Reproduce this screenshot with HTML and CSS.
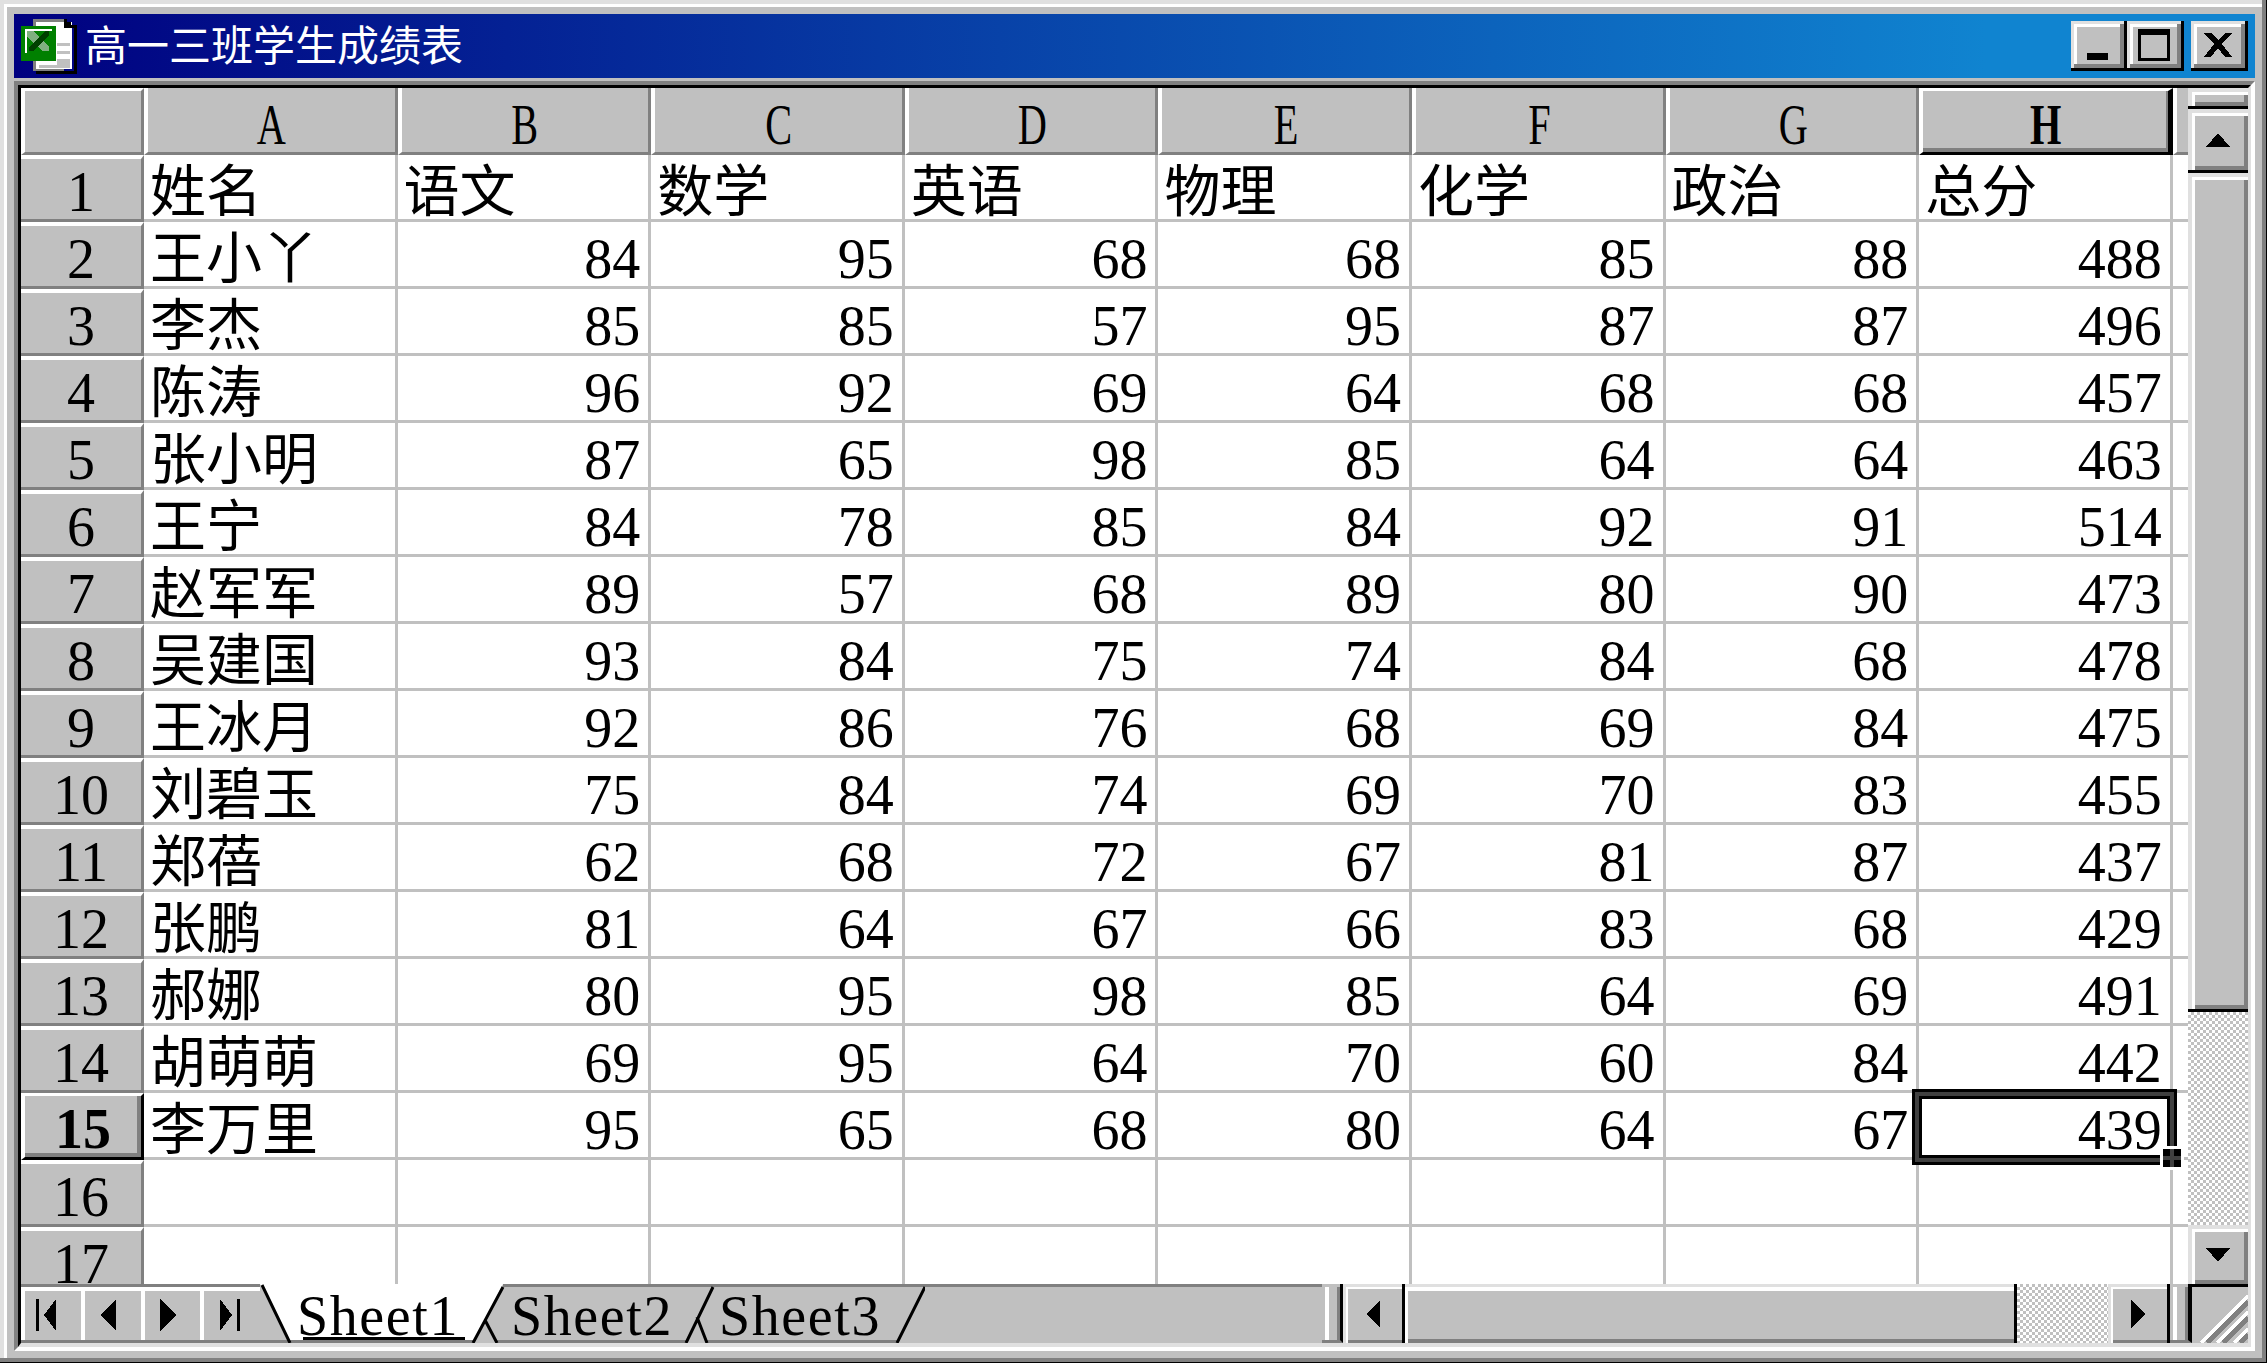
FILE: index.html
```html
<!DOCTYPE html>
<html lang="zh">
<head>
<meta charset="utf-8">
<title>高一三班学生成绩表</title>
<link rel="stylesheet" href="styles.css">
</head>
<body>
<div class="window">
  <div class="titlebar">
    <svg class="app-icon" viewBox="0 0 57 55" width="57" height="55" shape-rendering="crispEdges">
      <rect x="12" y="0" width="31" height="52" fill="#808080"/>
      <rect x="15" y="3" width="36" height="47" fill="#fff"/>
      <polygon points="43,0 46,0 46,3 50,3 50,6 56,6 56,55 15,55 15,52 53,52 53,9 43,9" fill="#000"/>
      <rect x="36" y="24" width="13" height="3" fill="#c0c0c0"/>
      <rect x="36" y="32" width="13" height="3" fill="#c0c0c0"/>
      <rect x="36" y="40" width="13" height="6" fill="#c0c0c0"/>
      <rect x="18" y="46" width="31" height="3" fill="#c0c0c0"/>
      <rect x="0" y="7" width="35" height="35" fill="#008000"/>
      <rect x="4" y="10" width="27" height="24" fill="#fff"/>
      <rect x="6" y="12" width="25" height="22" fill="#008000"/>
      <polygon points="6,12 12,12 28,28 28,32 22,32 6,18" fill="#80b080"/>
      <polygon points="24,12 28,12 28,16 12,32 8,32 8,28" fill="#004000"/>
    </svg>
    <span class="title-text">高一三班学生成绩表</span>
    <div class="win-buttons">
      <div class="win-btn min"><i class="min-glyph"></i></div>
      <div class="win-btn max"><i class="max-glyph"></i></div>
      <div class="win-btn close">
        <svg viewBox="0 0 28 24" width="28" height="24" shape-rendering="crispEdges"><path d="M0 0h7l7 7 7-7h7l-10 11 10 13h-7l-7-9-7 9H0l10-13z" fill="#000"/></svg>
      </div>
    </div>
  </div>
  <div class="client-outer">
    <div class="client">
      <div class="main">
        <div class="sheet">
          <div class="corner"></div>
          <div class="ch"><span class="t">A</span></div><div class="ch"><span class="t">B</span></div><div class="ch"><span class="t">C</span></div><div class="ch"><span class="t">D</span></div><div class="ch"><span class="t">E</span></div><div class="ch"><span class="t">F</span></div><div class="ch"><span class="t">G</span></div><div class="ch sel-col"><span class="t">H</span></div><div class="ch last"></div>

          <div class="rh"><span class="t">1</span></div><div class="c s">姓名</div><div class="c s">语文</div><div class="c s">数学</div><div class="c s">英语</div><div class="c s">物理</div><div class="c s">化学</div><div class="c s">政治</div><div class="c s">总分</div><div class="c x"></div>
          <div class="rh"><span class="t">2</span></div><div class="c s">王小丫</div><div class="c n"><span class="t">84</span></div><div class="c n"><span class="t">95</span></div><div class="c n"><span class="t">68</span></div><div class="c n"><span class="t">68</span></div><div class="c n"><span class="t">85</span></div><div class="c n"><span class="t">88</span></div><div class="c n"><span class="t">488</span></div><div class="c x"></div>
          <div class="rh"><span class="t">3</span></div><div class="c s">李杰</div><div class="c n"><span class="t">85</span></div><div class="c n"><span class="t">85</span></div><div class="c n"><span class="t">57</span></div><div class="c n"><span class="t">95</span></div><div class="c n"><span class="t">87</span></div><div class="c n"><span class="t">87</span></div><div class="c n"><span class="t">496</span></div><div class="c x"></div>
          <div class="rh"><span class="t">4</span></div><div class="c s">陈涛</div><div class="c n"><span class="t">96</span></div><div class="c n"><span class="t">92</span></div><div class="c n"><span class="t">69</span></div><div class="c n"><span class="t">64</span></div><div class="c n"><span class="t">68</span></div><div class="c n"><span class="t">68</span></div><div class="c n"><span class="t">457</span></div><div class="c x"></div>
          <div class="rh"><span class="t">5</span></div><div class="c s">张小明</div><div class="c n"><span class="t">87</span></div><div class="c n"><span class="t">65</span></div><div class="c n"><span class="t">98</span></div><div class="c n"><span class="t">85</span></div><div class="c n"><span class="t">64</span></div><div class="c n"><span class="t">64</span></div><div class="c n"><span class="t">463</span></div><div class="c x"></div>
          <div class="rh"><span class="t">6</span></div><div class="c s">王宁</div><div class="c n"><span class="t">84</span></div><div class="c n"><span class="t">78</span></div><div class="c n"><span class="t">85</span></div><div class="c n"><span class="t">84</span></div><div class="c n"><span class="t">92</span></div><div class="c n"><span class="t">91</span></div><div class="c n"><span class="t">514</span></div><div class="c x"></div>
          <div class="rh"><span class="t">7</span></div><div class="c s">赵军军</div><div class="c n"><span class="t">89</span></div><div class="c n"><span class="t">57</span></div><div class="c n"><span class="t">68</span></div><div class="c n"><span class="t">89</span></div><div class="c n"><span class="t">80</span></div><div class="c n"><span class="t">90</span></div><div class="c n"><span class="t">473</span></div><div class="c x"></div>
          <div class="rh"><span class="t">8</span></div><div class="c s">吴建国</div><div class="c n"><span class="t">93</span></div><div class="c n"><span class="t">84</span></div><div class="c n"><span class="t">75</span></div><div class="c n"><span class="t">74</span></div><div class="c n"><span class="t">84</span></div><div class="c n"><span class="t">68</span></div><div class="c n"><span class="t">478</span></div><div class="c x"></div>
          <div class="rh"><span class="t">9</span></div><div class="c s">王冰月</div><div class="c n"><span class="t">92</span></div><div class="c n"><span class="t">86</span></div><div class="c n"><span class="t">76</span></div><div class="c n"><span class="t">68</span></div><div class="c n"><span class="t">69</span></div><div class="c n"><span class="t">84</span></div><div class="c n"><span class="t">475</span></div><div class="c x"></div>
          <div class="rh"><span class="t">10</span></div><div class="c s">刘碧玉</div><div class="c n"><span class="t">75</span></div><div class="c n"><span class="t">84</span></div><div class="c n"><span class="t">74</span></div><div class="c n"><span class="t">69</span></div><div class="c n"><span class="t">70</span></div><div class="c n"><span class="t">83</span></div><div class="c n"><span class="t">455</span></div><div class="c x"></div>
          <div class="rh"><span class="t">11</span></div><div class="c s">郑蓓</div><div class="c n"><span class="t">62</span></div><div class="c n"><span class="t">68</span></div><div class="c n"><span class="t">72</span></div><div class="c n"><span class="t">67</span></div><div class="c n"><span class="t">81</span></div><div class="c n"><span class="t">87</span></div><div class="c n"><span class="t">437</span></div><div class="c x"></div>
          <div class="rh"><span class="t">12</span></div><div class="c s">张鹏</div><div class="c n"><span class="t">81</span></div><div class="c n"><span class="t">64</span></div><div class="c n"><span class="t">67</span></div><div class="c n"><span class="t">66</span></div><div class="c n"><span class="t">83</span></div><div class="c n"><span class="t">68</span></div><div class="c n"><span class="t">429</span></div><div class="c x"></div>
          <div class="rh"><span class="t">13</span></div><div class="c s">郝娜</div><div class="c n"><span class="t">80</span></div><div class="c n"><span class="t">95</span></div><div class="c n"><span class="t">98</span></div><div class="c n"><span class="t">85</span></div><div class="c n"><span class="t">64</span></div><div class="c n"><span class="t">69</span></div><div class="c n"><span class="t">491</span></div><div class="c x"></div>
          <div class="rh"><span class="t">14</span></div><div class="c s">胡萌萌</div><div class="c n"><span class="t">69</span></div><div class="c n"><span class="t">95</span></div><div class="c n"><span class="t">64</span></div><div class="c n"><span class="t">70</span></div><div class="c n"><span class="t">60</span></div><div class="c n"><span class="t">84</span></div><div class="c n"><span class="t">442</span></div><div class="c x"></div>
          <div class="rh sel-row"><span class="t">15</span></div><div class="c s">李万里</div><div class="c n"><span class="t">95</span></div><div class="c n"><span class="t">65</span></div><div class="c n"><span class="t">68</span></div><div class="c n"><span class="t">80</span></div><div class="c n"><span class="t">64</span></div><div class="c n"><span class="t">67</span></div><div class="c n active"><span class="t">439</span><i class="sel-box"></i><i class="handle"></i></div><div class="c x"></div>
          <div class="rh"><span class="t">16</span></div><div class="c"></div><div class="c"></div><div class="c"></div><div class="c"></div><div class="c"></div><div class="c"></div><div class="c"></div><div class="c"></div><div class="c x"></div>
          <div class="rh"><span class="t">17</span></div><div class="c"></div><div class="c"></div><div class="c"></div><div class="c"></div><div class="c"></div><div class="c"></div><div class="c"></div><div class="c"></div><div class="c x"></div>
        </div>
        <div class="vscroll">
          <div class="vsplit"></div>
          <div class="sb-btn up">
            <svg viewBox="0 0 24 14" width="24" height="14" shape-rendering="crispEdges"><polygon points="12,0 24,14 0,14" fill="#000"/></svg>
          </div>
          <div class="vthumb"></div>
          <div class="track"></div>
          <div class="sb-btn down">
            <svg viewBox="0 0 24 14" width="24" height="14" shape-rendering="crispEdges"><polygon points="0,0 24,0 12,14" fill="#000"/></svg>
          </div>
        </div>
      </div>
      <div class="bottom">
        <div class="nav">
          <div class="nav-btn"><svg viewBox="0 0 24 32" width="24" height="32" shape-rendering="crispEdges"><rect x="0" y="0" width="3" height="32"/><polygon points="8,16 20,0 20,32"/></svg></div>
          <div class="nav-btn"><svg viewBox="0 0 16 32" width="16" height="32" shape-rendering="crispEdges"><polygon points="0,16 16,0 16,32"/></svg></div>
          <div class="nav-btn"><svg viewBox="0 0 16 32" width="16" height="32" shape-rendering="crispEdges"><polygon points="16,16 0,0 0,32"/></svg></div>
          <div class="nav-btn"><svg viewBox="0 0 24 32" width="24" height="32" shape-rendering="crispEdges"><rect x="21" y="0" width="3" height="32"/><polygon points="16,16 4,0 4,32"/></svg></div>
        </div>
        <div class="tabs">
          <svg class="tabs-art" viewBox="0 0 665 59" width="665" height="59">
            <rect x="243" y="0" width="422" height="3" fill="#808080"/>
            <polygon points="0,0 243,0 213,59 30,59" fill="#fff"/>
            <rect x="0" y="56" width="637" height="3" fill="#808080"/>
            <rect x="43" y="53" width="162" height="3" fill="#000"/>
            <polygon points="225,36 237,59 213,59" fill="#c0c0c0"/>
            <polygon points="437,33 447,59 426,59" fill="#c0c0c0"/>
            <path d="M2 1 30 59M243 3 213 59M225 36 237 59M453 3 426 59M437 33 447 59M665 3 637 59" stroke="#000" stroke-width="3" fill="none"/>
          </svg>
          <span class="tab first"><span class="t">Sheet1</span></span>
          <span class="tab second"><span class="t">Sheet2</span></span>
          <span class="tab third"><span class="t">Sheet3</span></span>
        </div>
        <div class="filler"></div>
        <div class="hsplit"></div>
        <div class="hbtn">
          <svg viewBox="0 0 14 28" width="14" height="28" shape-rendering="crispEdges"><polygon points="0,14 14,0 14,28"/></svg>
        </div>
        <div class="hthumb"></div>
        <div class="track htrack"></div>
        <div class="hbtn right">
          <svg viewBox="0 0 14 28" width="14" height="28" shape-rendering="crispEdges"><polygon points="14,14 0,0 0,28"/></svg>
        </div>
        <div class="hsplit end"></div>
        <div class="grip">
          <svg viewBox="0 0 56 56" width="56" height="56" shape-rendering="crispEdges">
            <path d="M9 56 56 9M25 56 56 25M42 56 56 42" stroke="#fff" stroke-width="3"/>
            <path d="M15 56 56 15M31 56 56 31M48 56 56 48" stroke="#808080" stroke-width="5"/>
          </svg>
        </div>
      </div>
    </div>
  </div>
</div>
</body>
</html>
```

FILE: styles.css
```css
* { box-sizing: border-box; }
html, body { margin: 0; padding: 0; background: #c0c0c0; }
body { width: 2267px; height: 1363px; overflow: hidden; }

.window {
  width: 2267px;
  height: 1363px;
  padding: 14px 12px 12px 14px;
  background: #c0c0c0;
  display: flex;
  flex-direction: column;
  box-shadow:
    inset -1px -1px 0 #000,
    inset -5px -5px 0 #808080,
    inset 4px 4px 0 #e0e0e0,
    inset 7px 7px 0 #fff;
}

.titlebar {
  flex: none;
  height: 64px;
  display: flex;
  align-items: center;
  padding-left: 7px;
  background: linear-gradient(90deg, #000080 0%, #1084d0 88%, #1084d0 100%);
  color: #fff;
}
.app-icon { flex: none; margin-top: 1px; }
.title-text {
  margin: -7px 0 0 7px;
  font: 400 42px/1 "Noto Sans CJK SC", sans-serif;
  white-space: nowrap;
}
.win-buttons { margin-left: auto; display: flex; padding-right: 7px; }
.win-btn {
  width: 57px;
  height: 50px;
  background: #c0c0c0;
  position: relative;
  display: flex;
  align-items: center;
  justify-content: center;
  box-shadow:
    inset -3px -3px 0 #000,
    inset 3px 3px 0 #e0e0e0,
    inset -7px -7px 0 #808080,
    inset 6px 6px 0 #fff;
}
.win-btn.min { width: 56px; }
.win-btn.max { margin-right: 7px; }
.min-glyph { width: 21px; height: 7px; background: #000; margin-top: 20px; margin-right: 4px; }
.max-glyph { width: 32px; height: 32px; border: 3px solid #000; border-top-width: 6px; margin: -2px 4px 0 0; }
.win-btn.close svg { margin: -3px 4px 0 0; }

.client-outer {
  flex: none;
  margin-top: 3px;
  width: 2241px;
  height: 1270px;
  border-style: solid;
  border-width: 4px;
  border-color: #808080 #fff #fff #808080;
}
.client {
  width: 100%;
  height: 100%;
  border-style: solid;
  border-width: 3px 3px 4px 3px;
  border-color: #000 #e0e0e0 #e0e0e0 #000;
  display: flex;
  flex-direction: column;
  background: #c0c0c0;
}

.main { flex: none; height: 1196px; display: flex; }

.sheet {
  flex: none;
  width: 2167px;
  height: 1196px;
  overflow: hidden;
  display: grid;
  grid-template-columns: 123px repeat(8, 253.6px) 15.2px;
  grid-auto-rows: 67px;
  background: #fff;
}

.t {
  display: inline-block;
  font: 400 56px/1 "Liberation Serif", serif;
  color: #000;
  white-space: nowrap;
}

.corner {
  background: #c0c0c0;
  border-style: solid;
  border-width: 3px 3px 3px 4px;
  border-color: #fff #808080 #808080 #fff;
}

.ch {
  background: #c0c0c0;
  border-style: solid;
  border-width: 0 3px 3px 4px;
  border-color: #c0c0c0 #808080 #808080 #fff;
  display: flex;
  align-items: center;
  justify-content: center;
  overflow: hidden;
  padding-top: 10px;
}
.ch .t { transform: scaleX(.72); }
.ch.last { border-right: 0; }
.ch.sel-col {
  border-width: 3px 5px 3px 4px;
  border-color: #fff #000 #000 #fff;
  box-shadow: inset -2px -4px 0 #808080;
  padding-top: 7px;
}
.ch.sel-col .t { font-weight: 700; }

.rh {
  background: #c0c0c0;
  border-style: solid;
  border-width: 4px 3px 3px 0;
  border-color: #fff #808080 #808080 #c0c0c0;
  display: flex;
  align-items: center;
  justify-content: center;
  overflow: hidden;
  padding-top: 6px;
}
.rh.sel-row {
  border-width: 3px 3px 3px 4px;
  border-color: #fff #000 #000 #fff;
  box-shadow: inset -4px -4px 0 #808080;
  padding-top: 4px;
}
.rh.sel-row .t { font-weight: 700; }

.c {
  background: #fff;
  border-style: solid;
  border-width: 0 3px 3px 0;
  border-color: #c0c0c0;
  position: relative;
  color: #000;
}
.c.x { border-right: 0; }
.c.s {
  font: 400 56px/64px "Noto Sans CJK SC", sans-serif;
  padding-left: 6px;
  white-space: nowrap;
}
.c.n {
  display: flex;
  align-items: center;
  justify-content: flex-end;
  padding: 10px 8px 0 0;
}

.sel-box {
  position: absolute;
  left: -7px;
  right: -7px;
  top: -4px;
  bottom: -8px;
  border: 3px solid #000;
  box-shadow: inset 0 0 0 4px #404040, inset 0 0 0 7px #000;
  z-index: 2;
}
.handle {
  position: absolute;
  right: -11px;
  bottom: -10px;
  width: 18px;
  height: 18px;
  background:
    linear-gradient(#404040, #404040) center / 100% 4px no-repeat,
    linear-gradient(#404040, #404040) center / 4px 100% no-repeat,
    #000;
  outline: 3px solid #fff;
  z-index: 3;
}

.vscroll { flex: none; width: 60px; display: flex; flex-direction: column; background: #fff; }
.vsplit {
  flex: none;
  height: 21px;
  background: #c0c0c0;
  border-bottom: 3px solid #000;
  box-shadow: inset 0 4px 0 #e0e0e0, inset 4px 0 0 #e0e0e0, inset 7px 7px 0 #fff, inset -4px -4px 0 #808080;
}
.sb-btn {
  flex: none;
  background: #c0c0c0;
  display: flex;
  align-items: center;
  justify-content: center;
  box-shadow: inset 4px 4px 0 #e0e0e0, inset 7px 7px 0 #fff, inset -4px -4px 0 #808080;
}
.sb-btn.up { height: 64px; border-bottom: 3px solid #000; }
.sb-btn.down { height: 59px; }
.vthumb {
  flex: none;
  height: 839px;
  background: #c0c0c0;
  border-bottom: 3px solid #000;
  box-shadow: inset 4px 4px 0 #e0e0e0, inset 7px 7px 0 #fff, inset -4px -4px 0 #808080;
}
.track {
  flex: 1;
  background: conic-gradient(#c0c0c0 25%, #fff 0 50%, #c0c0c0 0 75%, #fff 0) 0 0 / 6px 6px;
}

.bottom { flex: none; height: 59px; display: flex; background: #c0c0c0; }

.nav {
  flex: none;
  width: 239px;
  display: flex;
  border-top: 3px solid #808080;
  border-bottom: 3px solid #808080;
}
.nav-btn {
  flex: 1;
  display: flex;
  align-items: center;
  justify-content: center;
  background: #c0c0c0;
  box-shadow: inset 4px 4px 0 #fff;
  padding: 3px 5px 0 0;
}
.nav-btn svg { fill: #000; }

.tabs {
  flex: none;
  width: 665px;
  position: relative;
  display: flex;
  align-items: center;
}
.tabs-art { position: absolute; left: 0; top: 0; }
.tab { position: relative; width: 162px; display: block; line-height: 1; padding-top: 4px; }
.tab.first { margin-left: 37px; }
.tab.second { margin-left: 52px; }
.tab.third { margin-left: 46px; }
.tab .t { letter-spacing: 1.6px; }

.filler { flex: 1; border-top: 3px solid #808080; }

.hsplit {
  flex: none;
  width: 21px;
  border-right: 3px solid #000;
  border-bottom: 3px solid #808080;
  background: #c0c0c0;
  box-shadow: inset 3px 3px 0 #c0c0c0, inset 7px 3px 0 #fff, inset 0 3px 0 #fff, inset -3px 0 0 #808080;
}
.hbtn {
  flex: none;
  width: 62px;
  display: flex;
  align-items: center;
  justify-content: center;
  background: #c0c0c0;
  border-right: 3px solid #000;
  box-shadow: inset 3px 0 0 #e0e0e0, inset 0 3px 0 #e0e0e0, inset 5px 5px 0 #fff, inset 0 -3px 0 #808080;
}
.hbtn.right { margin-left: 0; }
.hthumb {
  flex: none;
  width: 612px;
  background: #c0c0c0;
  border-right: 3px solid #000;
  box-shadow: inset 0 3px 0 #e0e0e0, inset 3px 7px 0 #fff, inset 0 -4px 0 #808080;
}
.htrack { flex: none; width: 91px; }
.hsplit.end { width: 22px; border-right-width: 4px; }
.grip {
  flex: none;
  width: 56px;
  height: 59px;
  border-top: 3px solid #000;
  background: #c0c0c0;
}
.grip svg { display: block; }
```
